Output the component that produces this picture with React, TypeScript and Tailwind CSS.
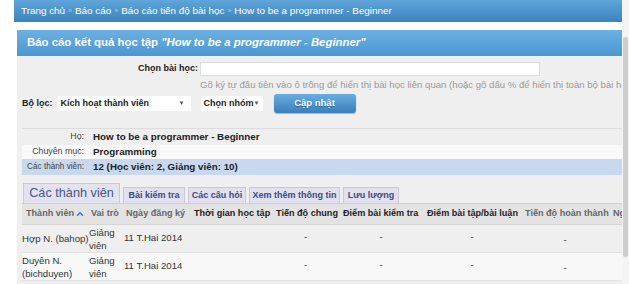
import React from "react";
import { ChevronUp } from "lucide-react";

const crumbs = ["Trang chủ", "Báo cáo", "Báo cáo tiến độ bài học", "How to be a programmer - Beginner"];

const cols = ["w-[65px]", "w-[35px]", "w-[68px]", "w-[82px]", "w-[67px]", "w-[84px]", "w-[98px]", "w-[88px]", "w-[30px]"];

const headers = [
  { label: "Thành viên", dim: true, sort: true },
  { label: "Vai trò", dim: true },
  { label: "Ngày đăng ký", dim: true },
  { label: "Thời gian học tập" },
  { label: "Tiến độ chung" },
  { label: "Điểm bài kiểm tra" },
  { label: "Điểm bài tập/bài luận" },
  { label: "Tiến độ hoàn thành", dim: true },
  { label: "Ng", dim: true },
];

const members = [
  { name: ["Hợp N. (bahop)"], date: "11 T.Hai 2014" },
  { name: ["Duyên N.", "(bichduyen)"], date: "11 T.Hai 2014" },
  { name: [""], date: "" },
];

function InfoRow({ label, value, bg, h, small }: { label: string; value: string; bg: string; h: string; small?: boolean }) {
  return (
    <div className={`flex items-center ${h} ${bg}`}>
      <div className={`w-[62px] whitespace-nowrap text-right text-[#444] ${small ? "text-[8.2px]" : "text-[8.8px]"}`}>{label}</div>
      <div className="pl-[9px] text-[9.8px] font-bold text-[#222]">{value}</div>
    </div>
  );
}

export default function App() {
  return (
    <div className="flex h-[284px] w-[629px] overflow-hidden bg-white font-['Liberation_Sans',Arial,sans-serif]">
      <div className="w-[622px] shrink-0 pl-[14px]">
        {/* breadcrumb */}
        <div className="flex h-[22px] items-center bg-gradient-to-b from-[#5fa5d9] to-[#3b83bd] pl-[7px] text-[9.9px] text-white">
          {crumbs.map((c, i) => (
            <React.Fragment key={c}>
              {i > 0 && <span className="mx-[3px] text-[7px] text-[#a9cbe6]">»</span>}
              <span>{c}</span>
            </React.Fragment>
          ))}
        </div>

        <div className="ml-[3px] mt-[8px]">
          {/* panel header */}
          <div className="flex h-[26px] items-center bg-gradient-to-b from-[#6bb0e2] to-[#4c97d0] pl-[10px] text-[11.4px] font-bold text-white">
            Báo cáo kết quả học tập&nbsp;<i>"How to be a programmer - Beginner"</i>
          </div>

          {/* panel body */}
          <div className="h-[230px] overflow-hidden bg-[#efefef] pl-[5px]">
            <div className="mt-[6px] flex items-center">
              <div className="w-[176px] text-right text-[9px] font-bold text-[#222]">Chọn bài học:</div>
              <div className="ml-[2px] h-[14px] w-[340px] border border-[#ddd] bg-white" />
            </div>
            <div className="mt-[3px] h-[12px] whitespace-nowrap pl-[178px] text-[9.6px] leading-[12px] text-[#9a9a9a]">
              Gõ ký tự đầu tiên vào ô trống để hiển thị bài học liên quan (hoặc gõ dấu % để hiển thị toàn bộ bài học)
            </div>

            <div className="mt-[3px] flex items-center">
              <span className="text-[9px] font-bold text-[#222]">Bộ lọc:</span>
              <div className="ml-[5px] flex h-[15px] w-[133px] items-center justify-between bg-white pl-[3px] pr-[6px] text-[9px] font-bold text-[#222]">
                <span>Kích hoạt thành viên</span>
                <span className="text-[6px] text-[#555]">▼</span>
              </div>
              <div className="ml-[10px] flex h-[15px] w-[62px] items-center justify-between whitespace-nowrap bg-white pl-[3px] pr-[3px] text-[9px] font-bold text-[#222]">
                <span>Chọn nhóm</span>
                <span className="text-[6px] text-[#555]">▼</span>
              </div>
              <button className="ml-[11px] flex h-[19px] w-[82px] items-center justify-center rounded-[3px] bg-gradient-to-b from-[#69aee2] to-[#3a7fb9] text-[9.5px] font-bold text-white [text-shadow:0_1px_1px_#2a5f8c] shadow-[0_1px_1px_rgba(0,0,0,0.25)]">
                Cập nhật
              </button>
            </div>

            {/* info rows */}
            <div className="mt-[15px] border-t border-[#dcdcdc]">
              <InfoRow label="Họ:" value="How to be a programmer - Beginner" bg="bg-[#efefef]" h="h-[16px]" />
              <InfoRow label="Chuyên mục:" value="Programming" bg="bg-[#f9f9f9]" h="h-[14px]" />
              <InfoRow label="Các thành viên:" value="12 (Học viên: 2, Giảng viên: 10)" bg="bg-[#c7d8ef]" h="h-[16px]" small />
            </div>

            {/* tabs */}
            <div className="mt-[8px] flex items-end gap-[3px] pl-[1px]">
              <div className="flex h-[20px] w-[97px] items-center justify-center border border-b-0 border-[#c9c9d6] bg-[#e3e3f0] text-[12.7px] text-[#4a5686]">
                Các thành viên
              </div>
              {[
                { t: "Bài kiểm tra", w: "w-[62px]" },
                { t: "Các câu hỏi", w: "w-[58px]" },
                { t: "Xem thêm thông tin", w: "w-[91px]" },
                { t: "Lưu lượng", w: "w-[56px]" },
              ].map((t) => (
                <div key={t.t} className={`flex h-[16px] ${t.w} items-center justify-center border border-b-0 border-[#c9c9d6] bg-[#e0e0f0] text-[9px] font-bold text-[#3d4b7e]`}>
                  {t.t}
                </div>
              ))}
            </div>

            {/* table */}
            <div className="border-t border-[#cfcfcf]">
              <div className="flex h-[21px] items-center border-b border-[#d6d6d6] bg-[#e3e3e3]">
                {headers.map((h, i) => (
                  <div key={h.label} className={`${cols[i]} flex shrink-0 items-center whitespace-nowrap pl-[4px] text-[9.1px] font-bold ${h.dim ? "text-[#666]" : "text-[#222]"}`}>
                    {h.label}
                    {h.sort && <ChevronUp size={10} strokeWidth={4} className="ml-[1px] text-[#3b7fc4]" />}
                  </div>
                ))}
              </div>
              {members.map((m, r) => (
                <div key={r} className={`flex h-[28px] border-b border-[#e2e2e2] text-[9.6px] text-[#333] ${r % 2 ? "bg-[#f8f8f8]" : "bg-[#efefef]"}`}>
                  <div className={`${cols[0]} flex shrink-0 flex-col justify-center leading-[13px]`}>
                    {m.name.map((n) => (
                      <span key={n} className="whitespace-nowrap">{n}</span>
                    ))}
                  </div>
                  <div className={`${cols[1]} flex shrink-0 flex-col justify-center pl-[2px] leading-[13px]`}>
                    <span>Giảng</span>
                    <span>viên</span>
                  </div>
                  <div className={`${cols[2]} flex shrink-0 items-center pl-[2px]`}>{m.date}</div>
                  <div className={`${cols[3]} shrink-0`} />
                  {[4, 5, 6].map((c) => (
                    <div key={c} className={`${cols[c]} shrink-0 pt-[5px] text-center`}>{m.date && "-"}</div>
                  ))}
                  <div className={`${cols[7]} flex shrink-0 items-center justify-center pt-[4px]`}>{m.date && "-"}</div>
                </div>
              ))}
            </div>
          </div>
        </div>
      </div>

      {/* scrollbar */}
      <div className="flex w-[7px] justify-center bg-[#f4f4f4]">
        <div className="mt-[37px] h-[220px] w-[5px] rounded-[2px] bg-[#cdcdcd]" />
      </div>
    </div>
  );
}
